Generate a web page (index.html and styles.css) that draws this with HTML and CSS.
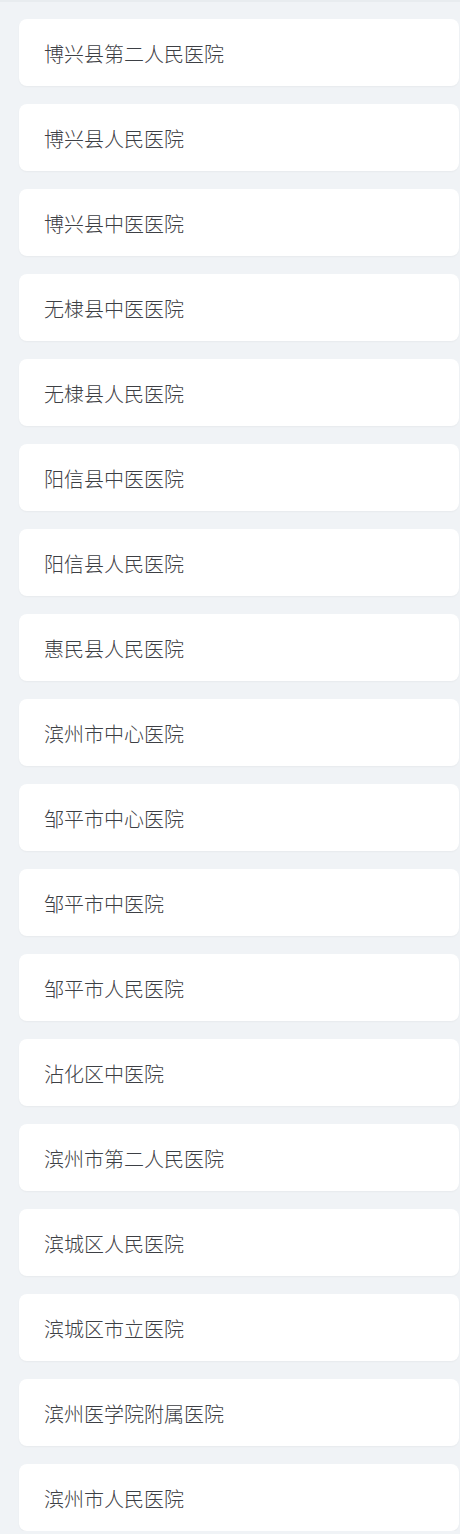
FILE: index.html
```html
<!DOCTYPE html>
<html lang="zh">
<head>
<meta charset="utf-8">
<link rel="stylesheet" href="styles.css">
</head>
<body>
<ul class="list">
  <li class="card">博兴县第二人民医院</li>
  <li class="card">博兴县人民医院</li>
  <li class="card">博兴县中医医院</li>
  <li class="card">无棣县中医医院</li>
  <li class="card">无棣县人民医院</li>
  <li class="card">阳信县中医医院</li>
  <li class="card">阳信县人民医院</li>
  <li class="card">惠民县人民医院</li>
  <li class="card">滨州市中心医院</li>
  <li class="card">邹平市中心医院</li>
  <li class="card">邹平市中医院</li>
  <li class="card">邹平市人民医院</li>
  <li class="card">沾化区中医院</li>
  <li class="card">滨州市第二人民医院</li>
  <li class="card">滨城区人民医院</li>
  <li class="card">滨城区市立医院</li>
  <li class="card">滨州医学院附属医院</li>
  <li class="card">滨州市人民医院</li>
</ul>
</body>
</html>
```
FILE: styles.css
```css
html, body {
  margin: 0;
  padding: 0;
  background: #f0f3f6;
}
body {
  border-top: 2px solid #e8ecef;
  font-family: "Noto Sans CJK SC", "Noto Sans", sans-serif;
}
.list {
  list-style: none;
  margin: 0;
  padding: 17px 1px 0 19px;
  display: flex;
  flex-direction: column;
  gap: 18px;
}
.card {
  height: 67px;
  box-sizing: border-box;
  background: #ffffff;
  border-radius: 8px;
  box-shadow: 0 1px 2px rgba(0, 0, 0, 0.04);
  display: flex;
  align-items: center;
  padding: 2px 0 0 25px;
  font-size: 20px;
  font-weight: 300;
  color: #3d4045;
}
```
